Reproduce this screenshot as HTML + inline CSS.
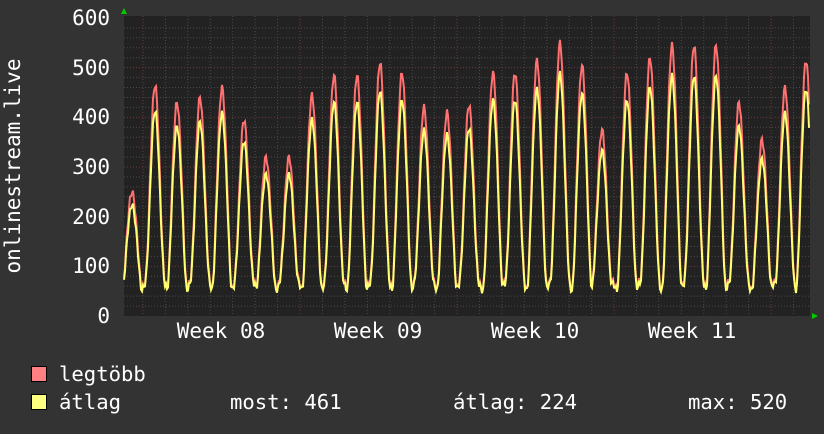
<!DOCTYPE html>
<html><head><meta charset="utf-8"><style>
body{margin:0;background:#333;width:824px;height:430px;overflow:hidden;font-family:"DejaVu Sans Mono","Liberation Mono",monospace;color:#fff}
svg text{font-family:"DejaVu Sans Mono","Liberation Mono",monospace;fill:#fff}
</style></head><body>
<svg id="s" width="824" height="430" xmlns="http://www.w3.org/2000/svg">
<rect x="0" y="0" width="824" height="430" fill="#333"/>
<rect x="124" y="16" width="686" height="300" fill="#222"/>
<g id="grid"></g>
<g id="data"></g>
<g font-size="21" text-anchor="end">
<text x="110" y="25">600</text><text x="110" y="75">500</text><text x="110" y="124">400</text>
<text x="110" y="174">300</text><text x="110" y="224">200</text><text x="110" y="273">100</text>
<text x="110" y="323">0</text>
</g>
<g font-size="21" text-anchor="middle">
<text x="221" y="338">Week 08</text><text x="378" y="338">Week 09</text>
<text x="535" y="338">Week 10</text><text x="692" y="338">Week 11</text>
</g>
<text font-size="21" transform="translate(20,166) rotate(-90)" text-anchor="middle">onlinestream.live</text>
<polygon points="121,14 127,14 124,8" fill="#0c0"/>
<polygon points="812,313 812,319 818,316" fill="#0c0"/>
<rect x="31.5" y="366.5" width="15" height="15" fill="#ff8080" stroke="#000"/>
<rect x="31.5" y="394.5" width="15" height="15" fill="#ffff80" stroke="#000"/>
<g font-size="20.6">
<text x="59" y="381">legtöbb</text>
<text x="59" y="409">átlag</text>
<text x="230" y="409">most: 461</text>
<text x="453" y="409">átlag: 224</text>
<text x="688" y="409">max: 520</text>
</g>
</svg>
<script>
function Y(v){return 316-v*0.4967;}
var g=document.getElementById("grid"),h="";
for(var v=20;v<600;v+=20){var y=Y(v);h+='<line x1="124" x2="810" y1="'+y+'" y2="'+y+'" stroke="'+(v%100==0?"#6a3a3a":"#4a4a4a")+'" stroke-dasharray="1,2"/>';}
for(var i=0;i<31;i++){var x=143+i*22.43;if(x>810)break;h+='<line y1="16" y2="316" x1="'+x+'" x2="'+x+'" stroke="'+(i%7==0?"#6a3a3a":"#4a4a4a")+'" stroke-dasharray="1,2"/>';}
g.innerHTML=h;
var peaks=[[132,250],[155,465],[177,430],[200,440],[222,460],[244,395],[266,320],[289,320],[312,445],[334,485],[357,485],[380,510],[402,490],[424,420],[447,410],[469,425],[493,490],[515,490],[537,515],[560,550],[582,505],[602,375],[627,490],[650,520],[672,545],[694,545],[716,545],[739,430],[762,355],[785,460],[806,515]];
function val(x){
  var k=0;while(k<peaks.length-1&&peaks[k+1][0]<x)k++;
  var p=peaks[k],q=peaks[Math.min(k+1,peaks.length-1)];
  var d=Math.abs(x-p[0]),d2=Math.abs(q[0]-x);
  var pk=d<d2?p:q,dist=Math.min(d,d2);
  var w=10,t=Math.min(1,dist/w);
  var lo=62+8*Math.sin(x*0.7);
  var f=Math.pow(Math.cos(t*Math.PI/2),1.8);
  return lo+(pk[1]-lo)*f;
}
var r="",yv="";
for(var x=124;x<=809;x+=1){var v=val(x)+7*Math.sin(x*1.9);r+=x+","+Y(v)+" ";yv+=x+","+Y(v*0.88+4)+" ";}
document.getElementById("data").innerHTML='<polyline points="'+r+'" fill="none" stroke="#ff7070" stroke-width="2"/><polyline points="'+yv+'" fill="none" stroke="#ffff70" stroke-width="2"/>';
</script>
</body></html>
